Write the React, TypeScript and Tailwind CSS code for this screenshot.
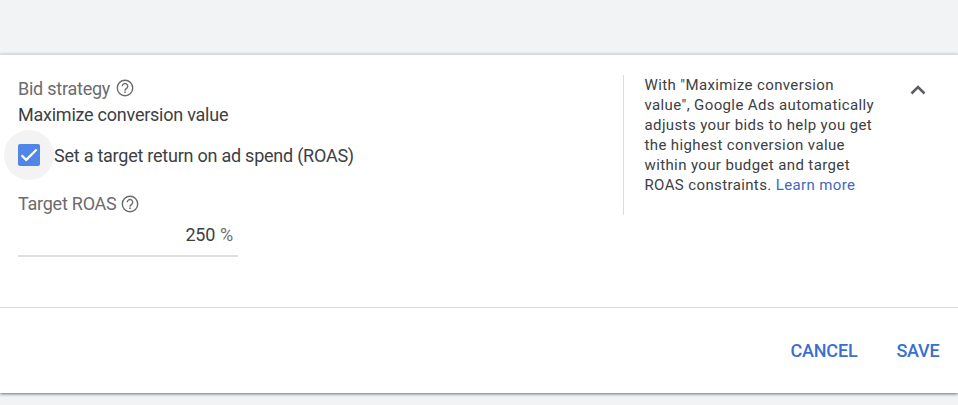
import React from "react";

function HelpIcon() {
  return (
    <svg className="h-[18px] w-[18px] shrink-0" viewBox="0 0 18 18" fill="none" stroke="currentColor" strokeWidth="1.4">
      <circle cx="9" cy="9" r="7.7" />
      <path d="M6.3 7.2a2.7 2.7 0 1 1 4.7 1.8C10 10 9 10.3 9 11.8" />
      <path d="M8.2 13.3h1.6" strokeWidth="1.5" />
    </svg>
  );
}

export default function App() {
  return (
    <div className="flex h-[405px] w-[958px] flex-col overflow-hidden bg-[#f1f3f4] pt-[54px] font-[Roboto,sans-serif] text-[18px] leading-[26px] tracking-[-0.24px] text-[#3c4043]">
      <div className="flex h-[339px] flex-col border-t border-[#dadce0] bg-white shadow-[0_1px_3px_rgba(0,0,0,0.55)]">
        {/* Settings */}
        <div className="flex h-[252px] pt-5">
          <section className="w-[623px] pl-[18px]">
            <div className="flex h-[26px] items-center gap-[5.5px] text-[#6a6c6e]">
              <span className="pt-[2px]">Bid strategy</span>
              <HelpIcon />
            </div>
            <div className="mt-px h-[28px]">Maximize conversion value</div>
            <label className="-ml-[14px] flex h-[50px] items-center">
              <span className="flex h-[50px] w-[50px] items-center justify-center rounded-full bg-[#f3f3f3]">
                <svg className="h-[22px] w-[22px]" viewBox="0 0 22 22" fill="none">
                  <rect width="22" height="22" rx="2" fill="#5086e8" />
                  <path d="m3.5 11.2 4.7 4.6L18.7 5.5" stroke="#fff" strokeWidth="2.3" />
                </svg>
              </span>
              <span className="pt-px">Set a target return on ad spend (ROAS)</span>
            </label>
            <div className="mt-[11px] flex h-[26px] items-center gap-[4.5px] text-[#6a6c6e]">
              <span>Target ROAS</span>
              <HelpIcon />
            </div>
            <div className="mt-[5px] flex h-[35px] w-[220px] justify-end gap-[5px] border-b-2 border-[#dfdfdf] pr-[5px]">
              <span>250</span>
              <span className="text-[#6a6c6e]">%</span>
            </div>
          </section>
          <aside className="flex h-[140px] w-[335px] border-l border-[#dadce0]">
            <p className="w-[270px] pl-[20.5px] text-[15px] leading-5 tracking-[0.38px]">
              With "Maximize conversion<br />
              value", Google Ads automatically<br />
              adjusts your bids to help you get<br />
              the highest conversion value<br />
              within your budget and target<br />
              ROAS constraints. <a className="text-[#4467bd]">Learn more</a>
            </p>
            <svg className="ml-[16px] mt-[9px] h-3 w-4" viewBox="0 0 16 12" fill="none" stroke="#5b5d60" strokeWidth="2.6">
              <path d="M1.5 9.5 8 3l6.5 6.5" />
            </svg>
          </aside>
        </div>
        {/* Actions */}
        <footer className="flex flex-1 items-center justify-end gap-[39px] border-t border-[#dadce0] pr-[18.5px] pt-px font-medium tracking-[-0.2px] text-[#3a6fd0]">
          <button>CANCEL</button>
          <button>SAVE</button>
        </footer>
      </div>
    </div>
  );
}
